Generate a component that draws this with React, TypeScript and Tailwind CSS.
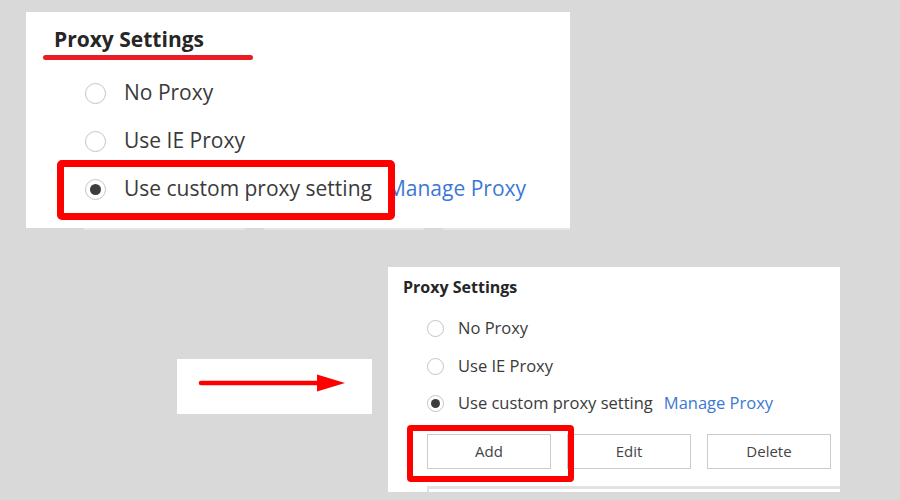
import React from 'react';

// Radio circle, sized by the caller
const Radio = ({ checked, box, dot }: { checked?: boolean; box: string; dot: string }) => (
  <span className={`${box} shrink-0 rounded-full border-[1.5px] border-[#c4c4c4] bg-white flex items-center justify-center`}>
    {checked && <span className={`${dot} rounded-full bg-[#3c3c3c]`} />}
  </span>
);

const options = ['No Proxy', 'Use IE Proxy', 'Use custom proxy setting'];

const App: React.FC = () => {
  return (
    <div className="w-[900px] h-[500px] overflow-hidden bg-[#d9d9d9] pt-[12px] font-['Open_Sans','Noto_Sans',sans-serif]">
      {/* --- Big zoomed panel --- */}
      <div className="relative ml-[26px] w-[544px] h-[216px] bg-white pl-[17px]">
        <div className="pt-[13px] pl-[11px] h-[42px] text-[21px] leading-[28px] font-bold text-[#262626]">
          Proxy Settings
        </div>
        <div className="mt-[1px] w-[210px] h-[5px] rounded-full bg-[#ec1c24]" />
        <div className="mt-[9px] pl-[42px]">
          {options.map((label, i) => (
            <div key={label} className="h-[48px] flex items-center">
              <Radio checked={i === 2} box="w-[21px] h-[21px]" dot="w-[11px] h-[11px]" />
              <span className="ml-[18px] text-[21px] text-[#3a3a3a]">{label}</span>
              {i === 2 && <span className="ml-[15px] text-[21px] text-[#3b78d6]">Manage Proxy</span>}
            </div>
          ))}
        </div>
        {/* annotation */}
        <div className="absolute left-[31px] top-[148px] w-[338px] h-[60px] border-[7px] border-[#ff0000] rounded-[5px]" />
      </div>
      <div className="ml-[84px] flex gap-[19px]">
        <div className="w-[161px] h-[2px] bg-[#e6e6e6]" />
        <div className="w-[160px] h-[2px] bg-[#e6e6e6]" />
        <div className="w-[127px] h-[2px] bg-[#e6e6e6]" />
      </div>

      <div className="flex items-start mt-[37px]">
        {/* --- Arrow --- */}
        <div className="ml-[177px] mt-[92px] w-[195px] h-[55px] bg-white">
          <svg width="195" height="55" viewBox="0 0 195 55">
            <line x1="24" y1="24" x2="145" y2="24" stroke="#ff0000" strokeWidth="4.5" strokeLinecap="round" />
            <polygon points="140,15.5 168,24 140,32.5" fill="#ff0000" />
          </svg>
        </div>

        {/* --- Normal size panel --- */}
        <div className="relative ml-[16px] w-[452px] h-[225px] bg-white overflow-hidden">
          <div className="pt-[10px] pl-[15px] h-[30px] text-[16px] leading-[20px] font-bold text-[#262626]">
            Proxy Settings
          </div>
          <div className="mt-[13px] pl-[39px]">
            {options.map((label, i) => (
              <div key={label} className="h-[37.5px] flex items-center">
                <Radio checked={i === 2} box="w-[17px] h-[17px]" dot="w-[9px] h-[9px]" />
                <span className="ml-[14px] text-[16.5px] text-[#3a3a3a]">{label}</span>
                {i === 2 && <span className="ml-[11px] text-[16.5px] text-[#3b78d6]">Manage Proxy</span>}
              </div>
            ))}
          </div>
          <div className="mt-[11px] pl-[39px] flex gap-[16px]">
            {['Add', 'Edit', 'Delete'].map(b => (
              <button key={b} className="w-[124px] h-[35px] border border-[#cbcbcb] bg-white text-[15px] text-[#444]">
                {b}
              </button>
            ))}
          </div>
          <div className="mt-[17px] ml-[39px] w-[440px] h-[40px] border-t-[3px] border-l-[2px] border-[#e2e2e2]" />
          {/* annotation */}
          <div className="absolute left-[19px] top-[158px] w-[167px] h-[57px] border-[6px] border-[#ff0000] rounded-[4px]" />
        </div>
      </div>
    </div>
  );
};

export default App;
